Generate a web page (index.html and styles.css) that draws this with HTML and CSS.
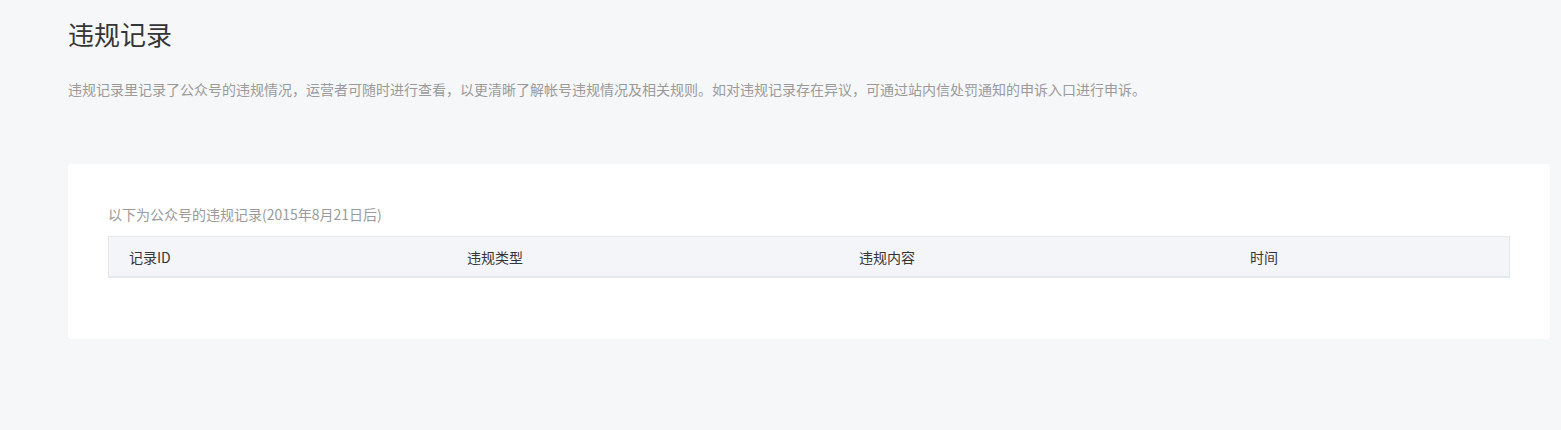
FILE: index.html
```html
<!DOCTYPE html>
<html lang="zh-CN">
<head>
<meta charset="utf-8">
<title>违规记录</title>
<link rel="stylesheet" href="styles.css">
</head>
<body>
<div class="page">
  <h2 class="title">违规记录</h2>
  <p class="desc">违规记录里记录了公众号的违规情况，运营者可随时进行查看，以更清晰了解帐号违规情况及相关规则。如对违规记录存在异议，可通过站内信处罚通知的申诉入口进行申诉。</p>
  <div class="card">
    <p class="caption">以下为公众号的违规记录(2015年8月21日后)</p>
    <div class="table-head">
      <div class="th">记录ID</div>
      <div class="th">违规类型</div>
      <div class="th">违规内容</div>
      <div class="th">时间</div>
    </div>
  </div>
</div>
</body>
</html>
```

FILE: styles.css
```css
html, body {
  margin: 0;
  padding: 0;
  background: #f6f7f9;
  font-family: "Noto Sans CJK SC", "Microsoft YaHei", sans-serif;
  color: #353535;
}
.page {
  padding: 14px 11px 0 68px;
}
.title {
  margin: 0;
  font-size: 26px;
  font-weight: 400;
  line-height: 40px;
  color: #353535;
}
.desc {
  margin: 25px 0 0;
  font-size: 14px;
  line-height: 20px;
  color: #9a9a9a;
}
.card {
  margin-top: 65px;
  background: #fff;
  border-radius: 3px;
  padding: 40px 40px 61px 40px;
  box-shadow: 0 1px 2px rgba(0,0,0,0.03);
}
.caption {
  margin: 0 0 12px;
  font-size: 14px;
  line-height: 20px;
  color: #9a9a9a;
}
.table-head {
  display: grid;
  grid-template-columns: 338px 392px 391px 1fr;
  background: #f4f5f9;
  border: 1px solid #e4e7ec;
  border-bottom-width: 2px;
  height: 39px;
  align-items: center;
}
.th {
  padding-left: 20px;
  font-size: 14px;
  color: #353535;
}
```
